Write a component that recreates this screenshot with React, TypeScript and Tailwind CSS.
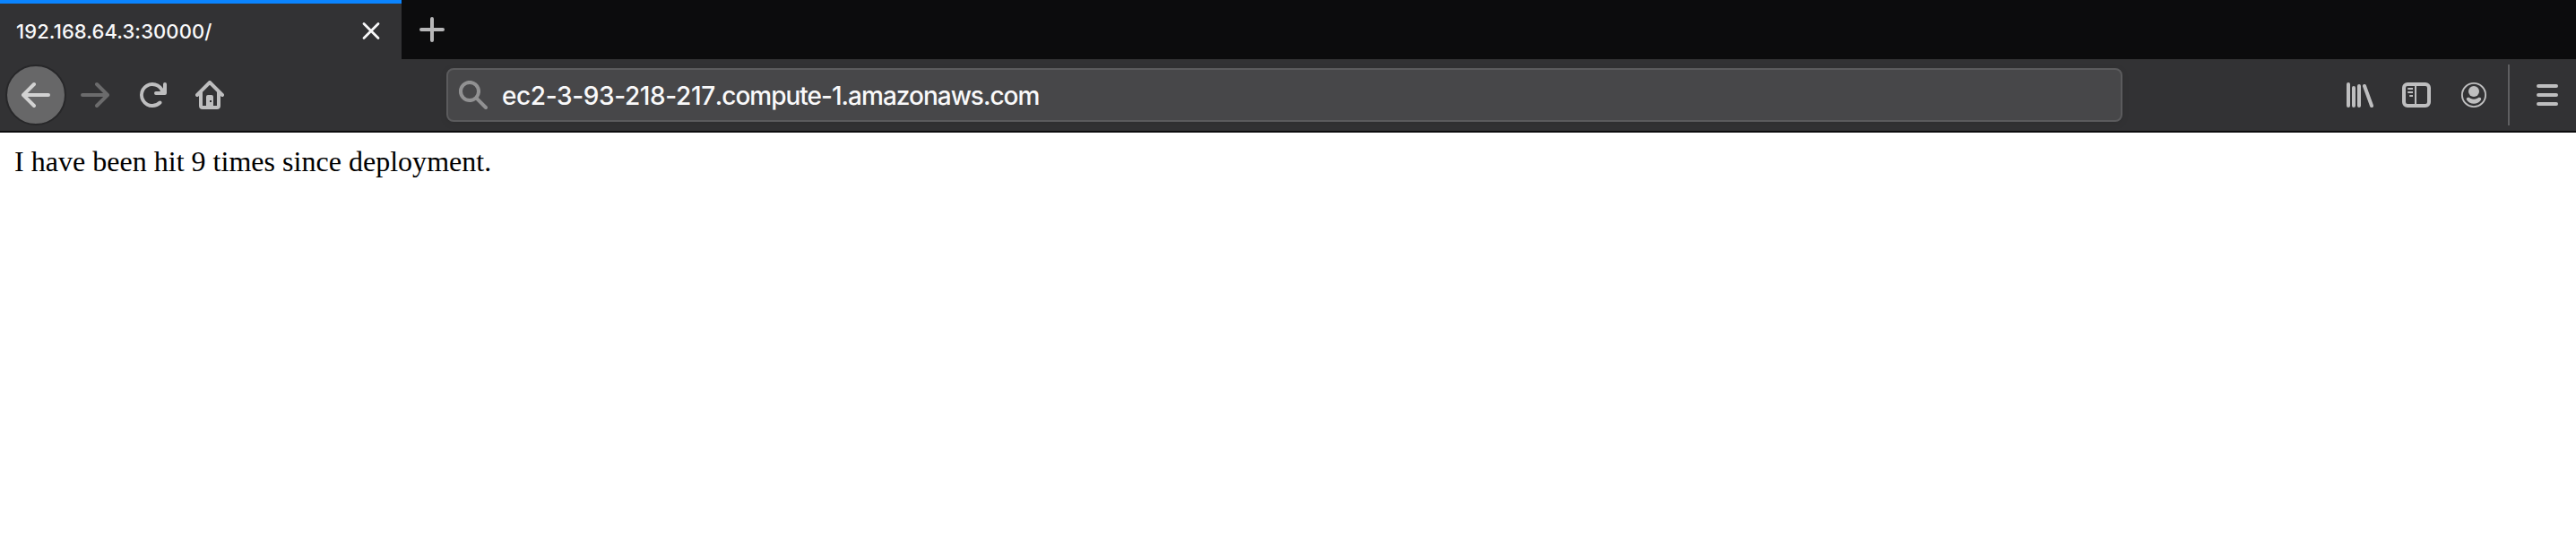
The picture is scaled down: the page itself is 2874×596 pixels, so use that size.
import type { ReactNode } from "react";

function Icon({ children, className = "" }: { children: ReactNode; className?: string }) {
  return (
    <svg viewBox="0 0 16 16" className={`size-8 shrink-0 fill-current ${className}`}>
      {children}
    </svg>
  );
}

const ARROW =
  "M15 7H3.414l4.293-4.293a1 1 0 0 0-1.414-1.414l-6 6a1 1 0 0 0 0 1.414l6 6a1 1 0 0 0 1.414-1.414L3.414 9H15a1 1 0 0 0 0-2z";

function TabStrip() {
  return (
    <div className="flex h-[66px] bg-[#0c0c0d]">
      <div className="flex w-[448px] items-center justify-between border-t-4 border-[#0a84ff] bg-[#323234] pr-[23px] pl-[18px]">
        <span className="text-[22px] leading-[30px] font-medium tracking-[0.1px] whitespace-nowrap text-[#f9f9fa]">
          192.168.64.3:30000/
        </span>
        <button className="flex text-[#f9f9fa]" aria-label="Close tab">
          <svg viewBox="0 0 22 22" className="size-[22px]" fill="none" stroke="currentColor" strokeWidth="2.8" strokeLinecap="round">
            <path d="M3 2.5l16 16M19 2.5l-16 16" />
          </svg>
        </button>
      </div>
      <button className="ml-[18px] flex items-center text-[#b7b7b8]" aria-label="New tab">
        <Icon>
          <path d="M14 7H9V2a1 1 0 0 0-2 0v5H2a1 1 0 1 0 0 2h5v5a1 1 0 0 0 2 0V9h5a1 1 0 0 0 0-2z" />
        </Icon>
      </button>
    </div>
  );
}

function Toolbar() {
  return (
    <div className="flex h-[82px] items-center border-b-2 border-[#0c0c0d] bg-[#323234] pr-4 pl-[6px] text-[#bebebf]">
      <button className="flex size-[68px] items-center justify-center rounded-full border-2 border-[#272729] bg-[#676768] text-[#d2d2d2]" aria-label="Back">
        <Icon>
          <path d={ARROW} />
        </Icon>
      </button>
      <button className="ml-4 flex text-[#6b6b6c]" aria-label="Forward">
        <Icon className="-scale-x-100">
          <path d={ARROW} />
        </Icon>
      </button>
      <button className="ml-8 flex" aria-label="Reload">
        <Icon>
          <path d="M15 1a1 1 0 0 0-1 1v2.418A6.995 6.995 0 1 0 8 15a6.954 6.954 0 0 0 4.95-2.05 1 1 0 0 0-1.414-1.414A5.019 5.019 0 1 1 12.549 6H10a1 1 0 0 0 0 2h5a1 1 0 0 0 1-1V2a1 1 0 0 0-1-1z" />
        </Icon>
      </button>
      <button className="ml-8 flex" aria-label="Home">
        <Icon>
          <path d="M15.707 7.293l-7-7a1 1 0 0 0-1.414 0l-7 7a1 1 0 0 0 1.414 1.414L2 8.414V14a2 2 0 0 0 2 2h8a2 2 0 0 0 2-2V8.414l.293.293a1 1 0 0 0 1.414-1.414zM12 14h-2V9a1 1 0 0 0-1-1H7a1 1 0 0 0-1 1v5H4V6.414l4-4 4 4z" />
          <rect x="8" y="11" width="1" height="1" fill="#323234" />
        </Icon>
      </button>
      <div className="ml-[248px] flex h-[60px] w-[1870px] items-center rounded-lg border-2 border-[#5b5b5d] bg-[#474749] pl-3 shadow-[0_2px_8px_rgba(0,0,0,0.08)]">
        <Icon className="text-[#919192]">
          <path d="M15.707 14.293l-4.822-4.822a6.019 6.019 0 1 0-1.414 1.414l4.822 4.822a1 1 0 0 0 1.414-1.414zM6 10a4 4 0 1 1 4-4 4 4 0 0 1-4 4z" />
        </Icon>
        <div className="ml-4 pt-0.5 text-[28px] leading-9 font-[450] tracking-[-1px] whitespace-nowrap text-[#f9f9fa]">
          <span className="tracking-[-0.38px]">ec2-3-93-218-217</span>.compute-1.amazonaws.com
        </div>
      </div>
      <button className="ml-[248px] flex" aria-label="Library">
        <Icon>
          <g fill="none" stroke="currentColor" strokeWidth="2" strokeLinecap="round">
            <path d="M2 2v12M5 4v10M8 3v11M11 3l4 11" />
          </g>
        </Icon>
      </button>
      <button className="ml-8 flex" aria-label="Sidebars">
        <Icon>
          <rect x="1" y="2" width="14" height="12" rx="2" fill="none" stroke="currentColor" strokeWidth="2" />
          <path d="M7 3h1v10H7zM3.5 4H6v1H3.5a.5.5 0 0 1 0-1zM3.5 6H6v1H3.5a.5.5 0 0 1 0-1zM4.5 8H6v1H4.5a.5.5 0 0 1 0-1z" />
        </Icon>
      </button>
      <button className="ml-8 flex" aria-label="Account">
        <Icon>
          <circle cx="8" cy="8" r="6.55" fill="none" stroke="currentColor" strokeWidth="0.95" />
          <circle cx="8" cy="6" r="3" />
          <path d="M4.9 9.4C4 9.4 3.6 10.2 4.1 10.9A4.9 4.9 0 0 0 8 12.9a4.9 4.9 0 0 0 3.9-2C12.4 10.2 12 9.4 11.1 9.4c-.5 0-.8.3-1.2.5a4.4 4.4 0 0 1-3.8 0C5.7 9.7 5.4 9.4 4.9 9.4z" />
        </Icon>
      </button>
      <div className="ml-[22px] h-[68px] w-0.5 bg-[#5f5f61]" />
      <button className="ml-[26px] flex" aria-label="Menu">
        <Icon>
          <path d="M3 2h10a1 1 0 0 1 0 2H3a1 1 0 0 1 0-2zM3 7h10a1 1 0 0 1 0 2H3a1 1 0 0 1 0-2zM3 12h10a1 1 0 0 1 0 2H3a1 1 0 0 1 0-2z" />
        </Icon>
      </button>
    </div>
  );
}

export default function App() {
  return (
    <div className="flex h-[596px] w-[2874px] flex-col overflow-hidden bg-white font-['Inter',sans-serif]">
      <TabStrip />
      <Toolbar />
      <main className="px-4 pt-[14px] font-['Liberation_Serif',serif] text-[32px] leading-9 tracking-[0.02px] text-black">
        I have been hit 9 times since deployment.
      </main>
    </div>
  );
}
